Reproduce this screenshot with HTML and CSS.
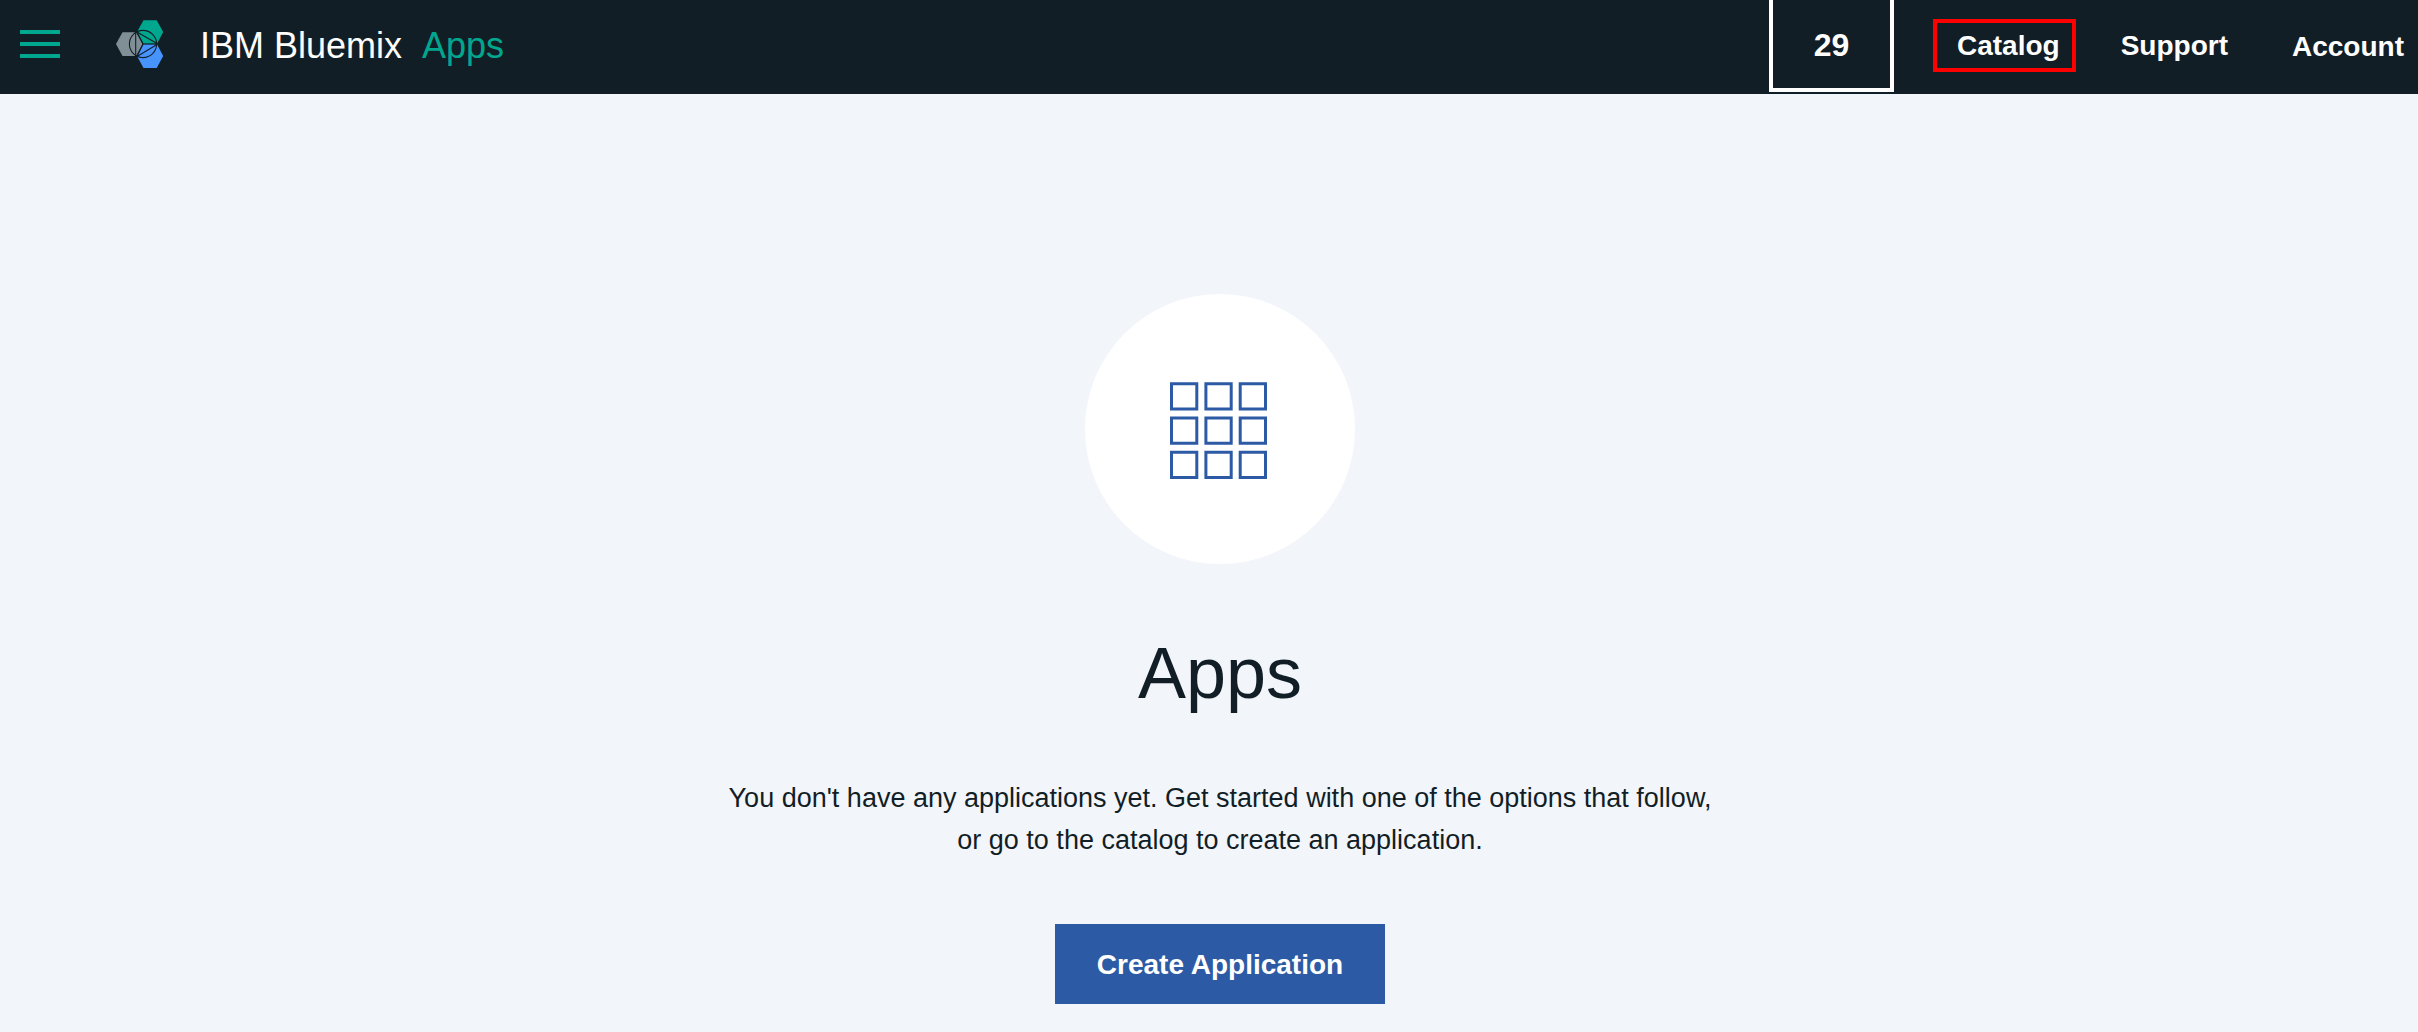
FILE: index.html
```html
<!DOCTYPE html>
<html lang="en">
<head>
  <meta charset="utf-8">
  <meta name="viewport" content="width=device-width, initial-scale=1">
  <title>IBM Bluemix Apps</title>
  <link rel="stylesheet" href="styles.css">
</head>
<body>
  <header class="header">
    <button class="menu" type="button" aria-label="Menu">
      <svg width="40" height="28" viewBox="0 0 40 28" aria-hidden="true"><path d="M0 2h40M0 14h40M0 26h40" stroke="#00a78f" stroke-width="4"/></svg>
    </button>
    <svg class="logo" width="48" height="48" viewBox="116 20 48 48" aria-hidden="true">
      <path d="M116 44l6.5-11.8H136l6.5 11.8-6.5 12h-13.5z" fill="#808f96"/>
      <path d="M137 32l6.500-11.800h13.200L163.200 32 157 43.700h-13.500z" fill="#00a78f"/>
      <path d="M137 56l6.500-11.700H157l6.200 11.700-6.500 12h-13.200z" fill="#4794ff"/>
      <g fill="none" stroke="#121e26" stroke-width="1.100">
        <circle cx="143" cy="44" r="13.600"/>
        <path d="M135.700 32v24.500M137 32l6 12-6 12.500M143 44h14M137 32l20 11.500M137 56.500L157 44.500"/>
      </g>
    </svg>
    <a class="brand" href="#">IBM Bluemix</a>
    <a class="section" href="#">Apps</a>
    <nav class="nav" aria-label="Main">
      <button class="count" type="button">29</button>
      <a class="nav-link nav-link-marked" href="#">Catalog</a>
      <a class="nav-link support" href="#">Support</a>
      <a class="nav-link" href="#">Account</a>
    </nav>
  </header>
  <main class="main">
    <div class="badge">
      <svg width="98" height="98" viewBox="0 0 98 98" fill="none" stroke="#2d5aa5" stroke-width="3" aria-hidden="true">
        <path d="M1.500 1.700h25.300v25.300H1.500zM35.900 1.700h25.300v25.300H35.900zM70.200 1.700h25.300v25.300H70.200zM1.500 36h25.300v25.300H1.500zM35.900 36h25.300v25.300H35.900zM70.200 36h25.300v25.300H70.200zM1.500 70.300h25.300v25.300H1.500zM35.900 70.300h25.300v25.300H35.900zM70.200 70.300h25.300v25.300H70.200z"/>
      </svg>
    </div>
    <h1 class="title">Apps</h1>
    <p class="message">You don't have any applications yet. Get started with one of the options that follow,<br>or go to the catalog to create an application.</p>
    <button class="create" type="button">Create Application</button>
  </main>
</body>
</html>
```
FILE: styles.css
```css
* {
  box-sizing: border-box;
}

body {
  margin: 0;
  background: #f2f5fa;
  color: #121e26;
  font-family: "Liberation Sans", Arial, sans-serif;
  font-size: 28px;
}

button {
  border: 0;
  border-radius: 0;
  background: none;
  color: inherit;
  font: inherit;
  cursor: pointer;
}

a {
  color: inherit;
  text-decoration: none;
}

.header {
  display: flex;
  align-items: center;
  min-height: 94px;
  padding: 0 14px 2px 20px;
  background: #121e26;
  color: #fff;
}

.menu {
  display: flex;
  padding: 0 0 4px;
}

.logo {
  margin: 0 36px 4px 56px;
}

.brand,
.section {
  font-size: 36px;
  line-height: 40px;
}

.section {
  margin-left: 20px;
  color: #00a78f;
}

.nav {
  display: flex;
  align-items: center;
  align-self: stretch;
  margin-left: auto;
}

.count {
  align-self: stretch;
  width: 125px;
  margin-right: 39px;
  padding: 2px 0 0;
  border: 4px solid #fff;
  border-top: 0;
  font-size: 32px;
  font-weight: 700;
}

.nav-link {
  font-weight: 700;
  line-height: 29px;
}

.nav-link-marked {
  margin: 0 45px 2px 0;
  padding: 8px 12px 8px 20px;
  border: 4px solid #f00;
}

.support {
  margin: 0 64px 2px 0;
}

.main {
  display: flex;
  flex-direction: column;
  align-items: center;
  padding: 200px 0 28px 22px;
}

.badge {
  display: flex;
  align-items: center;
  justify-content: center;
  width: 270px;
  height: 270px;
  padding: 4px 2px 0 0;
  border-radius: 50%;
  background: #fff;
}

.title {
  margin: 68px 0 62px;
  font-size: 72px;
  font-weight: 400;
  line-height: 83px;
}

.message {
  margin: 0;
  font-size: 27px;
  line-height: 42px;
  text-align: center;
}

.create {
  min-width: 330px;
  min-height: 80px;
  margin-top: 63px;
  padding-top: 2px;
  background: #2d5aa5;
  color: #fff;
  font-weight: 700;
}
```
